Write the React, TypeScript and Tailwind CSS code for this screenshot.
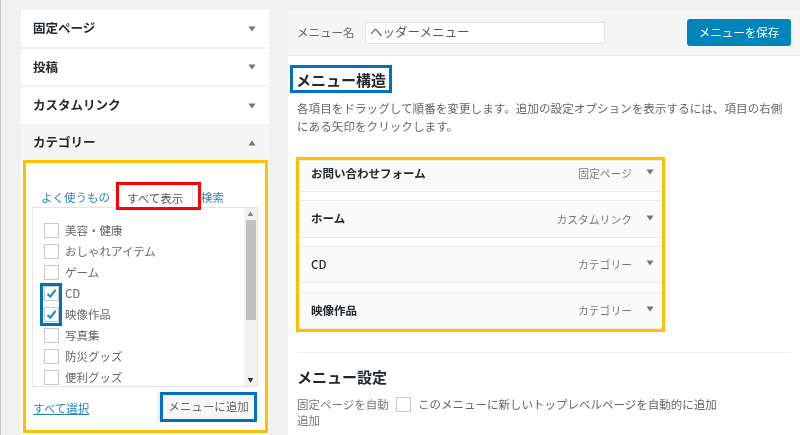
import React from "react";

const Arrow = ({ up = false }: { up?: boolean }) => (
  <svg width="8" height="6" viewBox="0 0 10 7" className="shrink-0">
    <path d={up ? "M5 0.5 L9.5 6.5 L0.5 6.5 Z" : "M0.5 0.5 L9.5 0.5 L5 6.5 Z"} fill="#72777c" />
  </svg>
);

const Box = ({ checked = false }: { checked?: boolean }) => (
  <span className="relative w-[15px] h-[15px] shrink-0 border border-[#c8c8c8] bg-white block">
    {checked && (
      <svg viewBox="0 0 16 16" className="absolute left-0 top-0 w-[13px] h-[13px]">
        <path d="M3 8.5 L6.5 12 L13 3.5" fill="none" stroke="#1e8cbe" strokeWidth="2.6" />
      </svg>
    )}
  </span>
);

const Acc = ({ label, h, open = false }: { label: string; h: string; open?: boolean }) => (
  <div className={`flex items-center justify-between pl-[12px] pr-[13px] ${h} ${open ? "bg-[#f5f5f5]" : "bg-white"}`}>
    <span className="text-[12.5px] font-bold text-[#23282d]">{label}</span>
    <Arrow up={open} />
  </div>
);

const cats = [
  ["美容・健康", false],
  ["おしゃれアイテム", false],
  ["ゲーム", false],
  ["CD", true],
  ["映像作品", true],
  ["写真集", false],
  ["防災グッズ", false],
  ["便利グッズ", false],
] as const;

const items = [
  ["お問い合わせフォーム", "固定ページ", "h-[32px] pb-[5px] font-bold"],
  ["ホーム", "カスタムリンク", "h-[38px] font-bold"],
  ["CD", "カテゴリー", "h-[37px] mb-px font-medium"],
  ["映像作品", "カテゴリー", "h-[37px] font-bold"],
] as const;

export default function App() {
  return (
    <div
      className="relative w-[800px] h-[435px] overflow-hidden bg-[#f1f1f1] flex pl-[20px] border-l border-[#c8c8c8] pt-[10px] gap-[19px] text-[#666] blur-[0.3px]"
      style={{ fontFamily: '"Noto Sans CJK JP", "Noto Sans", sans-serif' }}
    >
      <div className="w-[248px] flex flex-col shrink-0">
        <Acc label="固定ページ" h="h-[37px] mb-[2px]" />
        <Acc label="投稿" h="h-[36px] mb-[2px]" />
        <Acc label="カスタムリンク" h="h-[37px] mb-[1px]" />
        <Acc label="カテゴリー" h="h-[35px]" open />
        <div className="bg-white flex-1 pl-[2px] pr-[1px]">
          <div className="h-[273px] border-[3px] border-[#ffc000] bg-white flex flex-col relative">
            <div className="flex items-center h-[22px] mt-[24px] pl-[15px] text-[11.5px]">
              <span className="text-[#2a85b5] w-[86px]">よく使うもの</span>
              <span className="relative w-[74px] text-[#555] leading-[22px]">
                すべて表示
                <span className="absolute left-[-8px] top-[-2px] w-[74px] h-[25px] border-r border-[#e5e5e5]" />
                <span className="absolute z-10 left-[-11px] top-[-5px] w-[85px] h-[28px] border-[3px] border-[#ff0000]" />
              </span>
              <span className="text-[#2a85b5]">検索</span>
            </div>
            <div className="ml-[6px] w-[226px] h-[180px] -mt-[2px] border border-[#e5e5e5] bg-white relative flex flex-col pl-[11px] pt-[12px] overflow-hidden">
              {cats.map(([t, c]) => (
                <div key={t} className="flex items-center gap-[6px] h-[21px] shrink-0 text-[11.5px]">
                  <Box checked={c} />
                  <span>{t}</span>
                </div>
              ))}
              <div className="absolute right-0 top-0 bottom-0 w-[13px] bg-[#f1f1f1] flex flex-col items-center">
                <span className="text-[6px] leading-[12px] text-[#888]">▲</span>
                <div className="w-[10px] h-[100px] bg-[#c1c1c1]" />
                <span className="mt-auto text-[6px] leading-[12px] text-[#333]">▼</span>
              </div>
              <span className="absolute left-[7px] top-[75px] w-[22px] h-[43px] border-[3px] border-[#0070c0]" />
            </div>
            <div className="flex items-center justify-between pl-[7px] pr-[8px] mt-[5px]">
              <span className="text-[11.5px] text-[#2a85b5] underline relative top-[2px]">すべて選択</span>
              <span className="w-[97px] h-[30px] border-[3px] border-[#0070c0] bg-[#f7f7f7] shadow-[-3px_0_0_#eeeeee] flex items-center justify-center text-[11.5px] text-[#666]">
                メニューに追加
              </span>
            </div>
          </div>
        </div>
      </div>

      <div className="flex-1 bg-white flex flex-col">
        <div className="h-[46px] bg-[#f5f5f5] border-b border-[#eeeeee] flex items-center pl-[9px] pr-[9px]">
          <span className="text-[11.5px] w-[68px]">メニュー名</span>
          <span className="w-[240px] h-[22px] border border-[#e5e5e5] bg-white flex items-center pl-[4px] text-[12.5px] text-[#555]">
            ヘッダーメニュー
          </span>
          <span className="ml-auto w-[104px] h-[27px] rounded-[3px] bg-[#0085ba] text-white flex items-center justify-center text-[11.5px]">
            メニューを保存
          </span>
        </div>
        <div className="pl-[9px] pr-[9px] flex flex-col">
          <h2 className="relative mt-[9px] h-[28px] pt-[3px] -ml-px flex items-center text-[15px] font-bold text-[#23282d]">
            メニュー構造
            <span className="absolute left-[-6px] top-0 w-[102px] h-[28px] border-[3px] border-[#0070c0]" />
          </h2>
          <p className="mt-[6px] w-[487px] text-[11.6px] leading-[18px]">
            各項目をドラッグして順番を変更します。追加の設定オプションを表示するには、項目の右側にある矢印をクリックします。
          </p>
          <div className="mt-[22px] -ml-px w-[369px] h-[175px] border-[3px] border-[#ffc000] flex flex-col gap-[8px] overflow-hidden">
            {items.map(([a, b, h]) => (
              <div key={a} className={`${h} shrink-0 bg-[#fafafa] border-y border-[#e9e9e9] flex items-center pl-[12px] pr-[8px]`}>
                <span className="text-[11.5px] text-[#23282d]">{a}</span>
                <span className="ml-auto text-[10.8px] font-normal text-[#777]">{b}</span>
                <span className="ml-[14px] mb-[3px]"><Arrow /></span>
              </div>
            ))}
          </div>
          <div className="mt-[20px] border-t border-[#f1f1f1]" />
          <h3 className="mt-[13px] text-[15px] leading-[22px] font-bold text-[#23282d]">メニュー設定</h3>
          <div className="mt-[8px] flex text-[11.5px] leading-[16px]">
            <span className="w-[99px] shrink-0 text-[#777]">固定ページを自動<br />追加</span>
            <span className="mt-[1px]"><Box /></span>
            <span className="ml-[7px]">このメニューに新しいトップレベルページを自動的に追加</span>
          </div>
        </div>
      </div>
    </div>
  );
}
